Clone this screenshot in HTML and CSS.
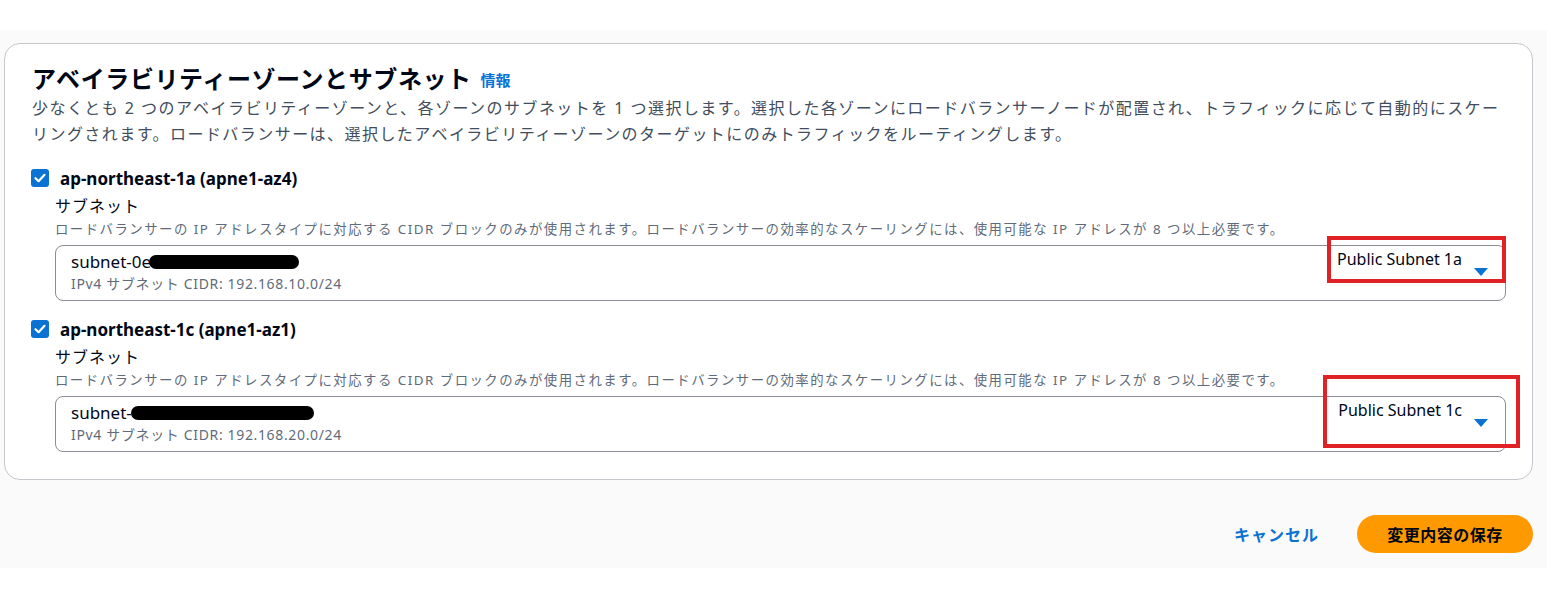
FILE: index.html
```html
<!DOCTYPE html>
<html lang="ja">
<head>
<meta charset="utf-8">
<link rel="stylesheet" href="styles.css">
</head>
<body>
<div class="topstrip"></div>
<main class="main">
  <section class="card">
    <h2 class="title">アベイラビリティーゾーンとサブネット <a class="info">情報</a></h2>
    <p class="desc">少なくとも 2 つのアベイラビリティーゾーンと、各ゾーンのサブネットを 1 つ選択します。選択した各ゾーンにロードバランサーノードが配置され、トラフィックに応じて自動的にスケーリングされます。ロードバランサーは、選択したアベイラビリティーゾーンのターゲットにのみトラフィックをルーティングします。</p>

    <div class="zone">
      <label class="zone-head">
        <span class="checkbox"><svg viewBox="0 0 18 18" width="18" height="18"><path d="M4.5 9.2 L7.6 12.2 L13.5 5.8" fill="none" stroke="#fff" stroke-width="2.2" stroke-linecap="round" stroke-linejoin="round"/></svg></span>
        <span class="zone-name">ap-northeast-1a (apne1-az4)</span>
      </label>
      <div class="field">
        <div class="field-label">サブネット</div>
        <div class="field-desc">ロードバランサーの IP アドレスタイプに対応する CIDR ブロックのみが使用されます。ロードバランサーの効率的なスケーリングには、使用可能な IP アドレスが 8 つ以上必要です。</div>
        <div class="select">
          <div class="sel-main">
            <div class="sel-id">subnet-0e<span class="redact r1"></span></div>
            <div class="sel-cidr">IPv4 サブネット CIDR: 192.168.10.0/24</div>
          </div>
          <div class="sel-side">
            <div class="sel-tag">Public Subnet 1a</div>
            <span class="caret"></span>
          </div>
          <div class="mark m1"></div>
        </div>
      </div>
    </div>

    <div class="zone">
      <label class="zone-head">
        <span class="checkbox"><svg viewBox="0 0 18 18" width="18" height="18"><path d="M4.5 9.2 L7.6 12.2 L13.5 5.8" fill="none" stroke="#fff" stroke-width="2.2" stroke-linecap="round" stroke-linejoin="round"/></svg></span>
        <span class="zone-name">ap-northeast-1c (apne1-az1)</span>
      </label>
      <div class="field">
        <div class="field-label">サブネット</div>
        <div class="field-desc">ロードバランサーの IP アドレスタイプに対応する CIDR ブロックのみが使用されます。ロードバランサーの効率的なスケーリングには、使用可能な IP アドレスが 8 つ以上必要です。</div>
        <div class="select">
          <div class="sel-main">
            <div class="sel-id">subnet-<span class="redact r2"></span></div>
            <div class="sel-cidr">IPv4 サブネット CIDR: 192.168.20.0/24</div>
          </div>
          <div class="sel-side">
            <div class="sel-tag">Public Subnet 1c</div>
            <span class="caret"></span>
          </div>
          <div class="mark m2"></div>
        </div>
      </div>
    </div>
  </section>

  <div class="footer">
    <a class="cancel">キャンセル</a>
    <button class="save">変更内容の保存</button>
  </div>
</main>
</body>
</html>
```

FILE: styles.css
```css
* { box-sizing: border-box; }
html, body { margin: 0; padding: 0; background: #ffffff; }
body {
  font-family: "Noto Sans", "Noto Sans CJK JP", sans-serif;
  color: #000716;
}
.topstrip { height: 30px; background: #ffffff; }
.main {
  background: #fafafa;
  height: 538px;
  padding: 13px 14px 0 4px;
}
.card {
  background: #ffffff;
  border: 1px solid #c6c6cd;
  border-radius: 16px;
  height: 437px;
  padding: 20px 26px 0 27px;
}
.title {
  margin: 0;
  font-size: 24px;
  font-weight: 700;
  line-height: 30px;
  letter-spacing: 0.6px;
}
.info {
  color: #0972d3;
  font-size: 15px;
  font-weight: 700;
  margin-left: 2px;
  letter-spacing: 0;
  vertical-align: 2px;
}
.desc {
  margin: 0;
  font-size: 16px;
  line-height: 26px;
  letter-spacing: 1.45px;
  color: #414d5c;
}
.zone { margin-top: 21px; }
.zone + .zone { margin-top: 18px; }
.zone-head {
  display: flex;
  align-items: center;
  height: 20px;
}
.checkbox {
  width: 18px;
  height: 18px;
  background: #0972d3;
  border-radius: 3px;
  display: inline-flex;
  margin-left: -1px;
}
.zone-name {
  margin-left: 11px;
  font-size: 17px;
  font-weight: 700;
  color: #000716;
}
.field { margin-left: 23px; margin-top: 7px; }
.field-label {
  font-size: 16px;
  line-height: 22px;
  letter-spacing: 1px;
  color: #000716;
}
.field-desc {
  font-size: 13.4px;
  line-height: 20px;
  letter-spacing: 1.48px;
  color: #5f6b7a;
  margin-top: 2px;
}
.select {
  position: relative;
  margin-top: 6px;
  height: 56px;
  border: 1px solid #8c8c94;
  border-radius: 8px;
  display: flex;
  justify-content: space-between;
  padding: 5px 17px 0 15px;
}
.sel-id {
  font-size: 17px;
  line-height: 22px;
  color: #000716;
  display: flex;
  align-items: center;
}
.redact {
  display: inline-block;
  background: #000;
  height: 14px;
  border-radius: 7px;
}
.r1 { width: 150px; margin-left: -2px; }
.r2 { width: 183px; margin-left: -1px; }
.sel-cidr {
  font-size: 14px;
  line-height: 18px;
  letter-spacing: 0.65px;
  margin-top: 2px;
  color: #5f6b7a;
}
.sel-side {
  display: flex;
  flex-direction: column;
  align-items: flex-end;
}
.sel-tag {
  font-size: 16px;
  line-height: 16px;
  margin-right: 26px;
  color: #000716;
}
.caret {
  width: 0;
  height: 0;
  border-left: 7px solid transparent;
  border-right: 7px solid transparent;
  border-top: 8px solid #0972d3;
  margin-top: 1px;
}
.mark {
  position: absolute;
  border: 4px solid #e02125;
}
.m1 { left: 1271px; top: -10px; width: 179px; height: 47px; }
.m2 { left: 1267px; top: -22px; width: 197px; height: 73px; }
.footer {
  display: flex;
  justify-content: flex-end;
  align-items: center;
  margin-top: 35px;
  gap: 38px;
}
.cancel {
  color: #0972d3;
  font-size: 16px;
  font-weight: 700;
  letter-spacing: 1px;
}
.save {
  background: #ff9900;
  border: none;
  border-radius: 20px;
  height: 38px;
  width: 176px;
  font-family: inherit;
  font-size: 16px;
  font-weight: 700;
  letter-spacing: 0.5px;
  color: #000716;
}
```
